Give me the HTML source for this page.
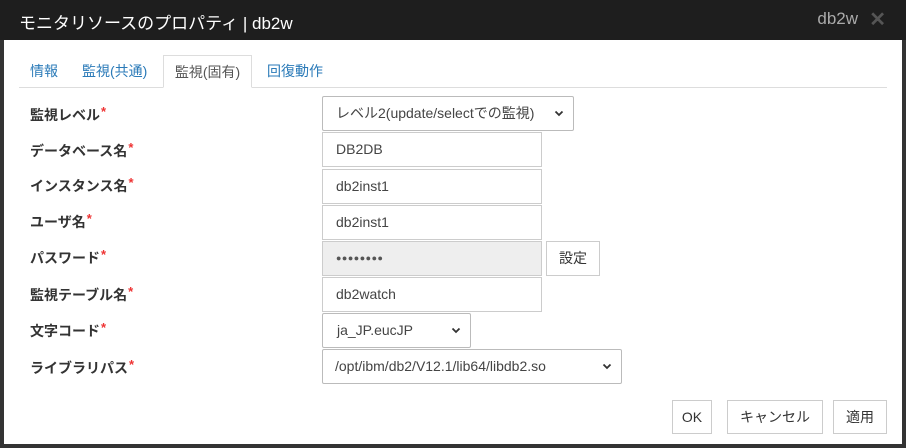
<!DOCTYPE html>
<html><head><meta charset="utf-8"><style>
body{margin:0;width:906px;height:448px;background:#333;position:relative;overflow:hidden;font-family:"Liberation Sans","Noto Sans CJK JP",sans-serif;}
.hdr{position:absolute;left:0;top:0;width:906px;height:40px;background:#1e1e1e;}
.hdr .t{position:absolute;left:19px;top:9px;color:#fff;font-size:17px;}
.hdr .r{position:absolute;right:48px;top:9px;color:#aaa;font-size:17px;}
.hdr .x{position:absolute;right:20px;top:7px;color:#555;font-size:20px;font-weight:bold;}
.a{position:absolute;}
.tabline{left:19px;top:87px;width:868px;height:1px;background:#ddd;}
.tab{top:61px;font-size:14px;color:#2a7ab8;}
.atab{left:163px;top:55px;width:89px;height:33px;border:1px solid #ddd;border-bottom:1px solid #fff;background:#fff;color:#555;font-size:14px;text-align:center;line-height:32px;box-sizing:border-box;}
.lbl{left:30px;font-size:14px;font-weight:bold;color:#333;}
.lbl span{color:#e33;vertical-align:4px;font-size:13px;margin-left:1px;}
.in{left:322px;width:220px;height:35px;border:1px solid #ccc;box-sizing:border-box;font-size:14px;color:#444;padding-left:13px;line-height:33px;background:#fff;}
.sel{border-radius:2px;border-color:#bbb;}
.chev{position:absolute;right:9px;top:13px;width:10px;height:7px;}
.btn{border:1px solid #ccc;box-sizing:border-box;font-size:14px;color:#333;text-align:center;background:#fff;}
</style></head><body>
<div class="hdr"><div class="t">モニタリソースのプロパティ | db2w</div><div class="r">db2w</div><div class="x">✕</div></div>
<div class="a" style="left:4px;top:40px;width:898px;height:404px;background:#fff"></div>
<div class="a tabline"></div>
<div class="a tab" style="left:30px">情報</div>
<div class="a tab" style="left:82px">監視(共通)</div>
<div class="a atab">監視(固有)</div>
<div class="a tab" style="left:267px">回復動作</div>

<div class="a lbl" style="top:104px">監視レベル<span>*</span></div>
<div class="a lbl" style="top:140px">データベース名<span>*</span></div>
<div class="a lbl" style="top:175px">インスタンス名<span>*</span></div>
<div class="a lbl" style="top:211px">ユーザ名<span>*</span></div>
<div class="a lbl" style="top:247px">パスワード<span>*</span></div>
<div class="a lbl" style="top:284px">監視テーブル名<span>*</span></div>
<div class="a lbl" style="top:320px">文字コード<span>*</span></div>
<div class="a lbl" style="top:357px">ライブラリパス<span>*</span></div>

<div class="a in sel" style="top:96px;width:252px">レベル2(update/selectでの監視)<svg class="chev" viewBox="0 0 10 7"><path d="M1.5 1.5L5 5L8.5 1.5" fill="none" stroke="#333" stroke-width="1.8"/></svg></div>
<div class="a in" style="top:132px">DB2DB</div>
<div class="a in" style="top:169px">db2inst1</div>
<div class="a in" style="top:205px">db2inst1</div>
<div class="a in" style="top:241px;background:#eee;letter-spacing:0.5px;font-size:9px;color:#555">●●●●●●●●</div>
<div class="a btn" style="left:546px;top:241px;width:54px;height:35px;line-height:33px">設定</div>
<div class="a in" style="top:277px">db2watch</div>
<div class="a in sel" style="top:313px;width:149px;padding-left:14px">ja_JP.eucJP<svg class="chev" viewBox="0 0 10 7"><path d="M1.5 1.5L5 5L8.5 1.5" fill="none" stroke="#333" stroke-width="1.8"/></svg></div>
<div class="a in sel" style="top:349px;width:300px;padding-left:12px">/opt/ibm/db2/V12.1/lib64/libdb2.so<svg class="chev" viewBox="0 0 10 7"><path d="M1.5 1.5L5 5L8.5 1.5" fill="none" stroke="#333" stroke-width="1.8"/></svg></div>

<div class="a btn" style="left:672px;top:400px;width:40px;height:34px;line-height:32px">OK</div>
<div class="a btn" style="left:727px;top:400px;width:96px;height:34px;line-height:32px">キャンセル</div>
<div class="a btn" style="left:833px;top:400px;width:54px;height:34px;line-height:32px">適用</div>
</body></html>
